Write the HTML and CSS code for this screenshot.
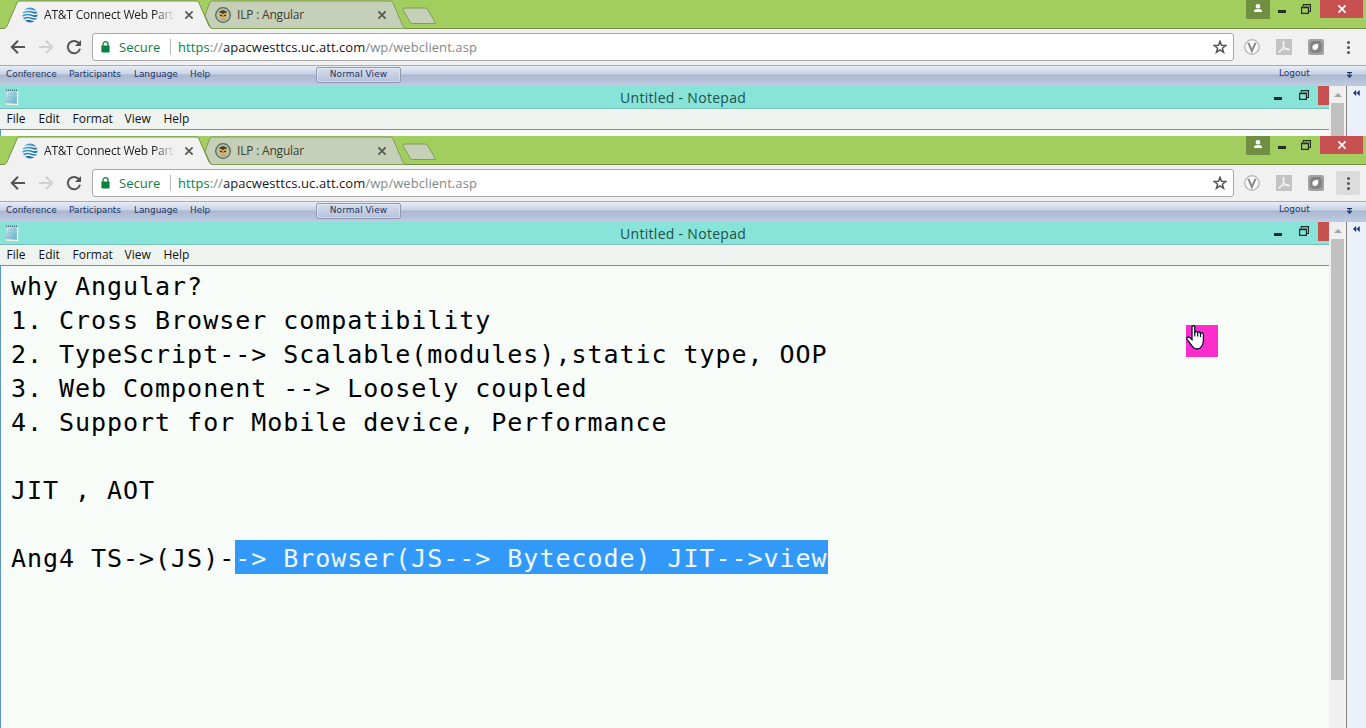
FILE: index.html
```
<!DOCTYPE html>
<html lang="en">
<head>
<meta charset="utf-8">
<title>AT&amp;T Connect Web Participant</title>
<link rel="stylesheet" href="styles.css">
</head>
<body>
<svg class="defs" width="0" height="0">
  <defs>
    <linearGradient id="globeFill" x1="0" y1="0" x2="1" y2="1"><stop offset="0" stop-color="#4fb4e0"/><stop offset="1" stop-color="#14568f"/></linearGradient>
    <linearGradient id="padFill" x1="0" y1="0" x2="1" y2="1"><stop offset="0" stop-color="#d5edf5"/><stop offset="1" stop-color="#5aa7c4"/></linearGradient>
    <symbol id="tabs" viewBox="0 0 450 29">
      <path d="M205 15L210 2Q211 1 213 1H390Q392 1 393 3L403 26Q404 28 406 28.500H211Z" fill="#c6cfb7" stroke="#7f9d54"/>
      <path d="M405 8H425Q427 8 428 10L435 22Q436 23.500 434 23.500H413Q411 23.500 410 22L403 10Q402.500 8 405 8Z" fill="#c6cfb7" stroke="#7f9d54"/>
      <path d="M4 28.500Q6 28 7 26L17 3Q18 1 20 1H196Q198 1 199 3L209 26Q210 28 212 28.500V30H4Z" fill="#f2f1f2" stroke="#79914f"/>
    </symbol>
    <symbol id="globe" viewBox="0 0 16 16">
      <circle cx="8" cy="8" r="7.500" fill="url(#globeFill)"/>
      <path d="M1.200 4.500Q5 2.300 9 3.400T14 4M.3 7.500Q5 5 9 6.500T15.700 7M.5 10.500Q5 8 9 9.700T15.300 10M2.200 13.200Q6 11.300 9 12.600T13.800 12.800" fill="none" stroke="#f4f8fb" stroke-width="1.400"/>
    </symbol>
    <symbol id="owl" viewBox="0 0 16 16">
      <circle cx="8" cy="8" r="7.300" fill="#b9c1a9" stroke="#55665a" stroke-width="1.300"/>
      <path d="M3.500 5L8 3L12.500 5L8 7Z" fill="#4b4026"/>
      <path d="M4.500 6.500L8 8L11.500 6.500V9L8 10.500L4.500 9Z" fill="#c98a2b"/>
      <path d="M5 8.500h2M9 8.500h2" stroke="#3c3524"/>
      <path d="M5 12.300h6" stroke="#d1a64c" stroke-width="1.500"/>
    </symbol>
    <symbol id="close" viewBox="0 0 10 10"><path d="M1.400 1.400L8.600 8.600M8.600 1.400L1.400 8.600" fill="none" stroke="currentColor" stroke-width="1.700"/></symbol>
    <symbol id="back" viewBox="0 0 16 16"><path d="M15 8H2.500M8 1.800L1.800 8L8 14.200" fill="none" stroke="currentColor" stroke-width="2"/></symbol>
    <symbol id="reload" viewBox="0 0 16 16"><path d="M13.300 4.800A6.200 6.200 0 1 0 14 9.800" fill="none" stroke="#555" stroke-width="2"/><path d="M15 1V7H9Z" fill="#555"/></symbol>
    <symbol id="lock" viewBox="0 0 9 12"><path d="M2 5V3.200a2.500 2.500 0 0 1 5 0V5" fill="none" stroke="#0b8043" stroke-width="1.300"/><rect x=".4" y="4.500" width="8.200" height="7" rx=".8" fill="#0b8043"/></symbol>
    <symbol id="star" viewBox="0 0 14 14"><path d="M7 1.300L8.500 5.300L12.800 5.500L9.400 8.200L10.600 12.400L7 10L3.400 12.400L4.600 8.200L1.200 5.500L5.500 5.300Z" fill="none" stroke="#555" stroke-width="1.500"/></symbol>
    <symbol id="vbadge" viewBox="0 0 16 16"><circle cx="8" cy="8" r="7.200" fill="#fafafa" stroke="#bdbdbd" stroke-width="1.400"/><path d="M4.400 3.800L7.800 12L11.500 3.800" fill="none" stroke="#888" stroke-width="2"/></symbol>
    <symbol id="pdf" viewBox="0 0 16 16"><path d="M0 0H16V16H0Z" fill="#c3c3c3"/><path d="M7.500 2.500C8.800 3.500 7.500 7 6.500 9C5.300 11.500 3.800 13.500 3 13C2.300 12.300 6.500 9.800 9.500 9.700C12.500 9.500 14 10.500 13 11C11.500 11.500 8.600 8.800 7.700 6.800C7 5 6.800 3.200 7.500 2.500Z" fill="none" stroke="#f4f4f4" stroke-width="1.100"/></symbol>
    <symbol id="blob" viewBox="0 0 16 16"><rect width="16" height="16" rx="2.500" fill="#a1a1a1"/><rect x="2" y="2" width="12" height="12" rx="4" fill="#838383"/><path d="M4.300 8.500Q4.500 5.300 8.500 4.800Q10.800 4.500 10.300 7Q9.700 11 7 11Q4.500 11 4.300 8.500Z" fill="#fff"/></symbol>
    <symbol id="person" viewBox="0 0 24 19"><path d="M0 0H24V19H0Z" fill="#718f43"/><circle cx="12" cy="6.200" r="2.300" fill="#fff"/><path d="M8 12V11Q8 9 12 9T16 11V12Z" fill="#fff"/></symbol>
    <symbol id="restore" viewBox="0 0 10 10"><path d="M.6 3H7.400V9.400H.6ZM0 3.600H8M2.300 2V.6H9.400V7.500H8" fill="none" stroke="#222d25" stroke-width="1.200"/></symbol>
    <symbol id="notepad" viewBox="0 0 14 16"><path d="M1.500 2L12 1.500V15L0 14.500Z" fill="url(#padFill)"/><path d="M12.500 2V15.300L1 15" fill="none" stroke="#f6f3df" stroke-width="1.300"/><path d="M1 1.300H12" stroke="#46666f" stroke-width="1.600" stroke-dasharray="1 1"/><path d="M3 5H11M3 7.500H11M2.500 10H11M2.500 12.500H10.500" stroke="#8cc3d7" stroke-width=".8"/></symbol>
    <symbol id="more" viewBox="0 0 7 8"><path d="M1 1.500H6M1 4H6" stroke="#17316b"/><path d="M2 1.500H5L3.500 3.300ZM1 4.500L3.500 7L6 4.500Z" fill="#17316b"/></symbol>
    <symbol id="rewind" viewBox="0 0 7 6"><path d="M3.200 0V6L0 3ZM6.700 0V6L3.500 3Z" fill="#17316b"/></symbol>
  </defs>
</svg>

<section class="capture capture-top">
  <header class="strip">
    <svg class="tab-shapes"><use href="#tabs"/></svg>
    <div class="tab tab-active"><svg class="fav"><use href="#globe"/></svg><span class="tab-text fade">AT&amp;T Connect Web Parti</span><svg class="x"><use href="#close"/></svg></div>
    <div class="tab tab-idle"><svg class="fav"><use href="#owl"/></svg><span class="tab-text">ILP : Angular</span><svg class="x"><use href="#close"/></svg></div>
    <div class="win-buttons"><svg class="person"><use href="#person"/></svg><i class="minimize"></i><svg class="restore"><use href="#restore"/></svg><span class="win-close"><svg><use href="#close"/></svg></span></div>
  </header>
  <nav class="toolbar">
    <svg class="nav-icon"><use href="#back"/></svg><svg class="nav-icon forward"><use href="#back"/></svg><svg class="nav-icon"><use href="#reload"/></svg>
    <div class="omnibox"><svg class="lock"><use href="#lock"/></svg><span class="secure">Secure</span><i class="sep"></i><span class="url"><b>https</b>://<em>apacwesttcs.uc.att.com</em>/wp/webclient.asp</span><svg class="star"><use href="#star"/></svg></div>
    <div class="extensions"><svg><use href="#vbadge"/></svg><svg><use href="#pdf"/></svg><svg><use href="#blob"/></svg></div>
    <div class="menu-dots"><i></i><i></i><i></i></div>
  </nav>
  <div class="meeting">
    <div class="meeting-menu"><span>Conference</span><span>Participants</span><span>Language</span><span>Help</span></div>
    <div class="view-button">Normal View</div>
    <span class="logout">Logout</span><svg class="more"><use href="#more"/></svg>
  </div>
  <main class="share">
    <div class="notepad">
      <div class="np-title"><svg class="np-icon"><use href="#notepad"/></svg><span class="np-name">Untitled - Notepad</span><i class="minimize"></i><svg class="restore"><use href="#restore"/></svg><i class="np-close"></i></div>
      <div class="np-menu"><span>File</span><span>Edit</span><span>Format</span><span>View</span><span>Help</span></div>
      <div class="np-text"></div>
    </div>
    <div class="scroll"><i class="arrow"></i><i class="thumb"></i></div>
    <aside class="panel"><svg><use href="#rewind"/></svg></aside>
  </main>
</section>

<section class="capture capture-main">
  <header class="strip">
    <svg class="tab-shapes"><use href="#tabs"/></svg>
    <div class="tab tab-active"><svg class="fav"><use href="#globe"/></svg><span class="tab-text fade">AT&amp;T Connect Web Parti</span><svg class="x"><use href="#close"/></svg></div>
    <div class="tab tab-idle"><svg class="fav"><use href="#owl"/></svg><span class="tab-text">ILP : Angular</span><svg class="x"><use href="#close"/></svg></div>
    <div class="win-buttons"><svg class="person"><use href="#person"/></svg><i class="minimize"></i><svg class="restore"><use href="#restore"/></svg><span class="win-close"><svg><use href="#close"/></svg></span></div>
  </header>
  <nav class="toolbar">
    <svg class="nav-icon"><use href="#back"/></svg><svg class="nav-icon forward"><use href="#back"/></svg><svg class="nav-icon"><use href="#reload"/></svg>
    <div class="omnibox"><svg class="lock"><use href="#lock"/></svg><span class="secure">Secure</span><i class="sep"></i><span class="url"><b>https</b>://<em>apacwesttcs.uc.att.com</em>/wp/webclient.asp</span><svg class="star"><use href="#star"/></svg></div>
    <div class="extensions"><svg><use href="#vbadge"/></svg><svg><use href="#pdf"/></svg><svg><use href="#blob"/></svg></div>
    <div class="menu-dots hovered"><i></i><i></i><i></i></div>
  </nav>
  <div class="meeting">
    <div class="meeting-menu"><span>Conference</span><span>Participants</span><span>Language</span><span>Help</span></div>
    <div class="view-button">Normal View</div>
    <span class="logout">Logout</span><svg class="more"><use href="#more"/></svg>
  </div>
  <main class="share">
    <div class="notepad">
      <div class="np-title"><svg class="np-icon"><use href="#notepad"/></svg><span class="np-name">Untitled - Notepad</span><i class="minimize"></i><svg class="restore"><use href="#restore"/></svg><i class="np-close"></i></div>
      <div class="np-menu"><span>File</span><span>Edit</span><span>Format</span><span>View</span><span>Help</span></div>
      <div class="np-text"><div class="line">why Angular?</div><div class="line">1. Cross Browser compatibility</div><div class="line">2. TypeScript--&gt; Scalable(modules),static type, OOP</div><div class="line">3. Web Component --&gt; Loosely coupled</div><div class="line">4. Support for Mobile device, Performance</div><div class="line"></div><div class="line">JIT , AOT</div><div class="line"></div><div class="line">Ang4 TS-&gt;(JS)-<span class="selected">-&gt; Browser(JS--&gt; Bytecode) JIT--&gt;view</span></div></div>
    </div>
    <div class="scroll"><i class="arrow"></i><i class="thumb"></i></div>
    <aside class="panel"><svg><use href="#rewind"/></svg></aside>
  </main>
  <div class="pointer"><svg viewBox="0 0 20 26"><path d="M6 1.500Q7.300 0 8.800 1.500V7.200Q10 5.800 11.500 7.300Q13 6.300 14.300 8Q16.500 7.200 17.400 9V16Q17.200 19 15.500 21.500Q14 24 11 24Q8 24 6 21L1 14.500Q0 12.500 2 12Q4 12 6 14.500Z" fill="#fff" stroke="#06123a" stroke-width="1.300"/><path d="M8.800 7V11.500M11.700 7.500V11.500M14.500 8V12" stroke="#06123a" stroke-width="1.200"/></svg></div>
</section>
</body>
</html>
```
FILE: styles.css
```
* { box-sizing: border-box; }
body { margin: 0; width: 1366px; height: 728px; overflow: hidden; font-family: "Open Sans", "Noto Sans", sans-serif; }
svg { display: block; flex: none; }
i { display: block; flex: none; }
span { white-space: nowrap; }
.defs { position: absolute; }

.capture { position: relative; display: flex; flex-direction: column; overflow: hidden; background: #f2f1f2; }
.capture-top { height: 136px; }
.capture-main { height: 592px; }

/* Tab strip */
.strip { position: relative; display: flex; flex: none; height: 29px; background: #a2ce60; border-bottom: 1px solid #758f45; }
.tab-shapes { position: absolute; left: 0; top: 0; width: 450px; height: 29px; }
.tab { position: relative; display: flex; align-items: center; height: 29px; font-size: 12px; color: #222; }
.tab-active { width: 207px; padding-left: 22px; }
.tab-idle { width: 193px; padding-left: 8px; color: #3c4235; }
.fav { width: 16px; height: 16px; margin-right: 6px; }
.tab-text { width: 134px; overflow: hidden; letter-spacing: -0.2px; line-height: 18px; }
.fade { -webkit-mask-image: linear-gradient(90deg, #000 82%, transparent 98%); mask-image: linear-gradient(90deg, #000 82%, transparent 98%); }
.x { width: 10px; height: 10px; margin-left: 6px; color: #55584f; }
.win-buttons { display: flex; margin-left: auto; margin-right: 3px; }
.person { width: 24px; height: 19px; }
.minimize { width: 8px; height: 3px; background: #222d25; }
.win-buttons .minimize { margin: 10px 0 0 8px; }
.restore { width: 10px; height: 10px; }
.win-buttons .restore { margin: 4px 0 0 15px; }
.win-close { display: flex; align-items: center; justify-content: center; width: 43px; height: 18px; margin-left: 9px; background: #c75050; color: #fff; }
.win-close svg { width: 10px; height: 10px; }

/* Address bar */
.toolbar { display: flex; flex: none; align-items: center; height: 36px; padding-left: 10px; background: #f2f1f2; }
.nav-icon { width: 16px; height: 16px; margin-right: 12px; color: #555; }
.forward { transform: scaleX(-1); color: #d0d0d0; }
.omnibox { display: flex; align-items: center; width: 1142px; height: 28px; margin-left: -2px; padding: 0 6px 0 8px; border: 1px solid #a9a7a9; border-radius: 3px; background: #fff; font-size: 13px; }
.lock { width: 9px; height: 12px; margin-right: 9px; }
.secure { width: 51px; color: #0b8043; }
.sep { width: 1px; height: 16px; margin-right: 7px; background: #b9b9b9; }
.url { flex: 1; color: #84888a; letter-spacing: 0.07px; }
.url b { font-weight: 400; color: #0b8043; }
.url em { font-style: normal; color: #171717; }
.star { width: 14px; height: 14px; }
.extensions { display: flex; gap: 16px; margin-left: 10px; }
.extensions svg { width: 16px; height: 16px; }
.menu-dots { display: flex; flex-direction: column; align-items: center; justify-content: center; gap: 2px; width: 24px; height: 24px; margin-left: 12px; border-radius: 2px; }
.menu-dots i { width: 3px; height: 3px; border-radius: 50%; background: #555; }
.hovered { background: #dcdcdc; }

/* Meeting bar */
.meeting { display: flex; flex: none; height: 21px; border-top: 1px solid #aaabb0; background: linear-gradient(#e6edf6 0, #c9d3e5 8px, #a9b8d2 9px, #bfcbe0 20px); font-family: "DejaVu Sans", sans-serif; font-size: 9px; line-height: 17px; color: #1c3667; }
.meeting-menu { display: grid; grid-template-columns: 63px 65px 56px 126px; width: 310px; margin-left: 6px; letter-spacing: -0.08px; }
.view-button { width: 85px; height: 16px; margin-top: 1px; border: 1px solid #8e9bb3; border-radius: 2px; background: linear-gradient(#d5deec, #b4c1d9); box-shadow: inset 0 0 0 1px rgba(255, 255, 255, 0.35); text-align: center; line-height: 13px; letter-spacing: 0.05px; }
.logout { width: 67px; margin-left: 878px; line-height: 15px; }
.more { width: 7px; height: 8px; margin-top: 5px; }

/* Shared notepad window */
.share { display: flex; flex: 1; min-height: 0; }
.notepad { display: flex; flex-direction: column; width: 1329px; background: #f7fcf9; }
.np-title { display: flex; flex: none; height: 23px; background: #88e4d9; border-bottom: 1px solid #79bdb5; }
.np-icon { width: 14px; height: 16px; margin: 3px 0 0 5px; }
.np-name { width: 654px; margin-left: 601px; font-size: 14px; letter-spacing: 0.3px; line-height: 23px; color: #20504e; }
.np-title .minimize { margin-top: 11px; }
.np-title .restore { margin: 4px 0 0 17px; }
.np-close { width: 11px; height: 19px; margin-left: auto; background: #c75050; }
.np-menu { display: grid; grid-template-columns: 32px 34px 52px 39px 60px; flex: none; height: 21px; padding-left: 6.5px; background: #eef3f0; border-bottom: 1px solid #5d97bd; font-size: 12px; line-height: 19px; color: #111; }
.np-text { flex: 1; min-height: 0; padding: 4px 0 0 10px; border-left: 1px solid #5d97bd; font-family: "DejaVu Sans Mono", monospace; font-size: 25px; letter-spacing: 0.96px; line-height: 34px; color: #000; }
.line { height: 34px; white-space: pre; }
.selected { display: inline-block; height: 34px; margin-top: -2px; line-height: 38px; background: #3399f9; color: #edf9ff; }
.scroll { width: 17px; padding: 7px 2px 48px; background: #f0f0f0; }
.arrow { width: 0; margin: 0 auto 6px; border: 4px solid transparent; border-top: 0; border-bottom: 4px solid #a3a3a3; }
.thumb { width: 13px; height: 441px; background: #c1c1c1; }
.panel { flex: 1; padding: 4px 0 0 6px; border-left: 1px solid #848484; background: #ebf0f9; }
.panel svg { width: 7px; height: 6px; }

.pointer { position: absolute; left: 1186px; top: 189px; width: 32px; height: 32px; background: #ff2dcc; }
.pointer svg { width: 20px; height: 26px; }
```
